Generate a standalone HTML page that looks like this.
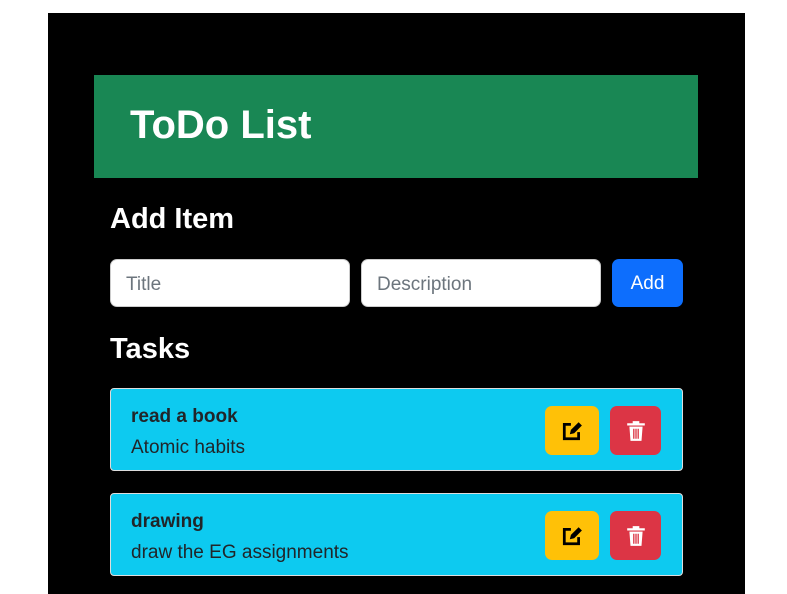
<!DOCTYPE html><html><head><style>
body{margin:0;width:787px;height:594px;background:#fff;font-family:"Liberation Sans",sans-serif;position:relative;overflow:hidden}
.bk{position:absolute;left:48px;top:13px;width:697px;height:581px;background:#000}
.a{position:absolute}
.hd{left:94px;top:75px;width:604px;height:103px;background:#198754;color:#fff;font-weight:bold;font-size:40px;line-height:100px;padding-left:36px;box-sizing:border-box}
h2{margin:0;color:#fff;font-weight:bold;font-size:29px;position:absolute}
.in{background:#fff;border:1px solid #ccc;border-radius:7px;height:48px;box-sizing:border-box;color:#6c757d;font-size:19px;line-height:50px;padding-left:15px}
.btn{background:#0d6efd;color:#fff;border-radius:7px;font-size:19px;text-align:center;line-height:50px}
.card{left:110px;width:573px;height:83px;background:#0dcaf0;border:1px solid #ddd;box-sizing:border-box;border-radius:4px;color:#212529}
.card b{position:absolute;left:20px;top:17px;font-size:19px}
.card span{position:absolute;left:20px;top:48px;font-size:19px}
.e,.d{position:absolute;top:17px;width:54px;height:49px;border-radius:7px;display:flex;align-items:center;justify-content:center}
.e{left:434px;background:#ffc107}.d{left:499px;width:51px;background:#dc3545}
</style></head><body>
<div class="bk"></div>
<div class="a hd">ToDo List</div>
<h2 style="left:110px;top:203px">Add Item</h2>
<div class="a in" style="left:110px;top:259px;width:240px">Title</div>
<div class="a in" style="left:361px;top:259px;width:240px">Description</div>
<div class="a btn" style="left:612px;top:259px;width:71px;height:48px">Add</div>
<h2 style="left:110px;top:333px">Tasks</h2>
<div class="a card" style="top:388px"><b>read a book</b><span>Atomic habits</span>
<div class="e"><svg width="22" height="22" viewBox="0 0 20 20"><path d="M9 4H3v13h13v-6" fill="none" stroke="#000" stroke-width="2.5"/><path d="M8 13l1-4 7-7 3 3-7 7z" fill="#000"/></svg></div>
<div class="d"><svg width="20" height="22" viewBox="0 0 18 20"><path d="M1 3h16v2H1zM6 1h6v2H6zM3 6h12l-1 13H4z" fill="#fff"/><path d="M7 8v9M9 8v9M11 8v9" stroke="#dc3545" stroke-width="1.2"/></svg></div></div>
<div class="a card" style="top:493px"><b>drawing</b><span>draw the EG assignments</span>
<div class="e"><svg width="22" height="22" viewBox="0 0 20 20"><path d="M9 4H3v13h13v-6" fill="none" stroke="#000" stroke-width="2.5"/><path d="M8 13l1-4 7-7 3 3-7 7z" fill="#000"/></svg></div>
<div class="d"><svg width="20" height="22" viewBox="0 0 18 20"><path d="M1 3h16v2H1zM6 1h6v2H6zM3 6h12l-1 13H4z" fill="#fff"/><path d="M7 8v9M9 8v9M11 8v9" stroke="#dc3545" stroke-width="1.2"/></svg></div></div>
</body></html>
